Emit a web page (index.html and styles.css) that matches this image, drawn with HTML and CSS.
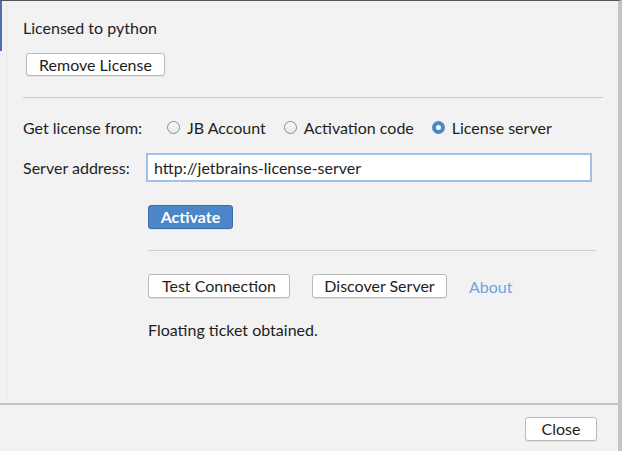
FILE: index.html
```html
<!DOCTYPE html>
<html>
<head>
<meta charset="utf-8">
<link rel="stylesheet" href="styles.css">
</head>
<body>
<div class="dialog">
  <div class="main">
    <div class="content">
      <div class="licensed">Licensed to python</div>
      <div class="remove-row"><button class="btn remove">Remove License</button></div>
      <div class="sep top"></div>
      <div class="row get-row">
        <span class="label">Get license from:</span>
        <label class="radio"><span class="circle"></span>JB Account</label>
        <label class="radio"><span class="circle"></span>Activation code</label>
        <label class="radio"><span class="circle checked"></span>License server</label>
      </div>
      <div class="row server-row">
        <span class="label">Server address:</span>
        <div class="input">http://jetbrains-license-server</div>
      </div>
      <div class="indent">
        <button class="btn primary">Activate</button>
        <div class="sep inner"></div>
        <div class="actions">
          <button class="btn test">Test Connection</button>
          <button class="btn discover">Discover Server</button>
          <a class="about">About</a>
        </div>
        <div class="status">Floating ticket obtained.</div>
      </div>
    </div>
  </div>
  <div class="footer">
    <button class="btn close">Close</button>
  </div>
</div>
</body>
</html>
```

FILE: styles.css
```css
html, body {
  margin: 0;
  padding: 0;
  background: #f2f2f2;
}
body {
  font-family: Lato, "Open Sans", sans-serif;
  font-size: 16px;
  color: #1e1e1e;
  width: 622px;
  height: 451px;
  overflow: hidden;
}
.dialog {
  width: 622px;
  height: 451px;
  display: flex;
  flex-direction: column;
  box-sizing: border-box;
  border-top: 1px solid #555;
  border-right: 4px solid #c4c4c4;
  position: relative;
}
.dialog::before {
  content: "";
  position: absolute;
  left: 0;
  top: 0;
  width: 2px;
  height: 50px;
  background: #4b6fb0;
}
.main {
  height: 402px;
  box-sizing: border-box;
  border-left: 1px solid #e8e8e8;
  margin-left: 6px;
}
.content {
  padding: 12px 0 0 16px;
  width: 580px;
}
.licensed {
  height: 30px;
  line-height: 30px;
}
.remove-row {
  padding-top: 10px;
}
.btn {
  font-family: inherit;
  font-size: 16px;
  color: #1e1e1e;
  background: #fff;
  border: 1px solid #b9b9b9;
  border-radius: 3px;
  height: 24px;
  padding: 0;
  box-sizing: border-box;
  line-height: 22px;
  box-shadow: 0 1px 0 #e2e2e2;
}
.remove { width: 139px; margin-left: 3px; height: 23px; line-height: 21px; }
.sep {
  height: 1px;
  background: #cdcdcd;
  margin: 20px 0 0 0;
}
.sep.top { margin-top: 21px; }
.row {
  display: flex;
  align-items: center;
}
.get-row {
  margin-top: 19px;
  height: 20px;
}
.label {
  width: 144px;
  flex: none;
}
.radio {
  display: flex;
  align-items: center;
  margin-right: 18px;
}
.circle {
  width: 13px;
  height: 13px;
  border-radius: 50%;
  border: 1px solid #8e8e8e;
  background: linear-gradient(#fafafa, #e8e8e8);
  margin-right: 7px;
  box-sizing: border-box;
}
.circle.checked {
  border: 4px solid #4a87cc;
  background: #fff;
}
.server-row {
  margin-top: 16px;
}
.server-row .label { width: 123px; }
.input {
  width: 446px;
  height: 29px;
  box-sizing: border-box;
  border: 2px solid #9fc2e6;
  background: #fff;
  line-height: 25px;
  padding-left: 6px;
}
.indent {
  margin-left: 125px;
  width: 448px;
}
.primary {
  margin-top: 23px;
  width: 85px;
  background: #4a86c8;
  border-color: #3b6ea8;
  color: #fff;
  font-weight: bold;
}
.sep.inner {
  margin-top: 21px;
}
.actions {
  display: flex;
  align-items: center;
  margin-top: 23px;
}
.test { width: 142px; }
.discover { width: 135px; margin-left: 22px; }
.about {
  color: #6da3e3;
  margin-left: 22px;
}
.status {
  margin-top: 22px;
}
.footer {
  border-top: 2px solid #c4c4c4;
  flex: 1;
  display: flex;
  justify-content: flex-end;
  align-items: flex-start;
  padding: 12px 21px 0 0;
}
.close { width: 72px; }
```
